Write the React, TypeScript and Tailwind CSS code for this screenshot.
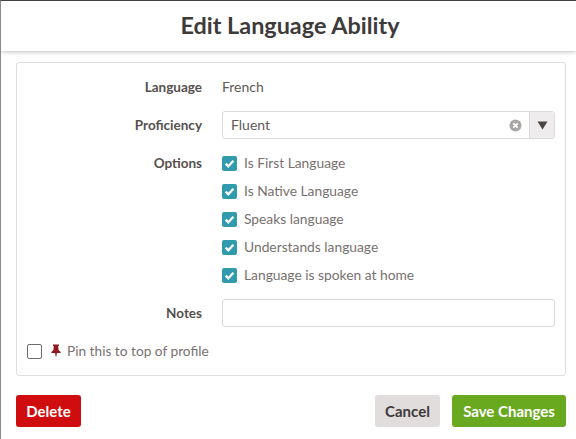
import React from 'react';

const options = [
  'Is First Language',
  'Is Native Language',
  'Speaks language',
  'Understands language',
  'Language is spoken at home',
];

const Check = () => (
  <span className="flex h-[15px] w-[15px] items-center justify-center rounded-[2px] bg-[#2f9bad]">
    <svg width="11" height="11" viewBox="0 0 11 11" fill="none">
      <path d="M1.6 5.6 L4.3 8.3 L9.4 2.8" stroke="#fff" strokeWidth="2.2" />
    </svg>
  </span>
);

export default function App() {
  return (
    <div className="relative flex h-[439px] w-[576px] flex-col overflow-hidden border-t border-l border-t-[#444] border-l-[#8a8a8a] bg-white font-['Lato',sans-serif] text-[14px] text-[#5f5a58]">
      {/* page behind the dialog, showing at the edge */}
      <div className="absolute top-[46px] -left-px h-[35px] w-px bg-[#5d8a2c]" />

      {/* Header */}
      <div className="flex h-[50px] shrink-0 items-center justify-center pl-[3px] shadow-[0_1px_4px_rgba(0,0,0,0.25)]">
        <h1 className="text-[23.4px] font-bold text-[#3e3a39]">Edit Language Ability</h1>
      </div>

      {/* Form panel */}
      <div className="mt-[11px] ml-[15px] flex h-[314px] w-[550px] shrink-0 flex-col rounded-[3px] border border-[#dfdddd] pt-[12px] pl-[10px]">
        <div className="flex h-[24px] items-center">
          <div className="w-[175px] text-right text-[13.5px] font-bold text-[#55504e]">Language</div>
          <div className="ml-[20px] pb-[2px]">French</div>
        </div>
        <div className="mt-[12px] flex h-[28px] items-center">
          <div className="w-[175px] text-right text-[13.5px] font-bold text-[#55504e]">Proficiency</div>
          <div className="ml-[20px] flex h-[28px] w-[333px] items-center rounded-[3px] border border-[#dcdada]">
            <span className="ml-[8px] flex-1 pb-[2px]">Fluent</span>
            <svg width="13" height="13" viewBox="0 0 13 13" className="mr-[7px]">
              <circle cx="6.5" cy="6.5" r="6" fill="#aaa5a5" />
              <path d="M4.3 4.3 L8.7 8.7 M8.7 4.3 L4.3 8.7" stroke="#fff" strokeWidth="1.8" />
            </svg>
            <span className="flex h-full w-[25px] items-center justify-center border-l border-[#dcdada] bg-[#eeecec]">
              <svg width="11" height="9" viewBox="0 0 11 9">
                <path d="M0.5 0.5 H10.5 L5.5 8.5 Z" fill="#4a4543" />
              </svg>
            </span>
          </div>
        </div>
        <div className="mt-[17px] flex">
          <div className="w-[175px] text-right text-[13.5px] leading-[15px] font-bold text-[#55504e]">Options</div>
          <div className="ml-[20px] flex flex-col gap-[13px]">
            {options.map((o) => (
              <div key={o} className="flex h-[15px] items-center gap-[7px]">
                <Check />
                <span className="pb-[1px] text-[13.8px] text-[#77716f]">{o}</span>
              </div>
            ))}
          </div>
        </div>
        <div className="mt-[16px] flex h-[28px] items-center">
          <div className="w-[175px] text-right text-[13.5px] font-bold text-[#55504e]">Notes</div>
          <div className="ml-[20px] h-[28px] w-[333px] rounded-[3px] border border-[#dcdada]" />
        </div>
        <div className="mt-[17px] flex h-[15px] items-center">
          <span className="h-[15px] w-[15px] rounded-[2px] border border-[#6f6b6a]" />
          <svg width="10" height="14" viewBox="0 0 10 14" className="mt-[-1px] ml-[9px]">
            <path d="M2 0.5 H8 V2 H7.2 L7.6 6 L9.6 8 V9 H6 L5 13.5 L4 9 H0.4 V8 L2.4 6 L2.8 2 H2 Z" fill="#8f1a20" />
          </svg>
          <span className="ml-[6px] pb-[1px] text-[13.7px] text-[#77716f]">Pin this to top of profile</span>
        </div>
      </div>

      {/* Footer */}
      <div className="mt-[19px] ml-[15px] flex w-[550px] justify-between text-[15px]">
        <button className="h-[32px] w-[65px] rounded-[3px] bg-[#cf0c0e] font-bold text-white">Delete</button>
        <div className="flex gap-[12px]">
          <button className="h-[32px] w-[65px] rounded-[3px] bg-[#e1dddd] font-bold text-[#3e3a39]">Cancel</button>
          <button className="h-[32px] w-[114px] rounded-[3px] bg-[#69a920] font-bold text-white">Save Changes</button>
        </div>
      </div>
    </div>
  );
}
